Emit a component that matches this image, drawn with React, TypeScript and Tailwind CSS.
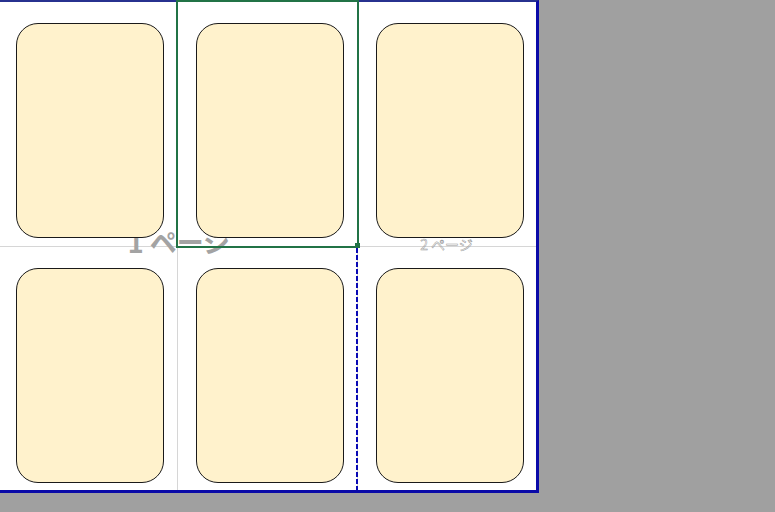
export default function App() {
  const rows = [0, 1];
  const cols = [0, 1, 2];

  return (
    <div className="h-[512px] w-[775px] overflow-hidden bg-[#a0a0a0] font-['Noto_Sans_CJK_JP',sans-serif]">
      <div className="relative h-[493px] w-[539px]">
        {/* page labels sit under the shapes */}
        <div className="absolute left-0 top-[228px] flex h-[28px] w-[358px] items-center justify-center text-[27px] leading-[28px] font-bold text-[#a3a3a3]">
          1&nbsp;ページ
        </div>
        <div className="absolute left-[357px] top-[237px] flex h-[14px] w-[179px] items-center justify-center text-[14px] leading-[14px] text-transparent [-webkit-text-stroke:0.5px_#999999]">
          2&nbsp;ページ
        </div>

        <div className="h-[493px] w-[539px] border-t-2 border-r-[3px] border-b-[3px] border-t-[#27318f] border-r-[#0a0aa8] border-b-[#0a0aa8] bg-white">
          {rows.map((r) => (
            <div key={r} className="flex">
              {cols.map((c) => (
                <div
                  key={c}
                  className={
                    (c === 0 ? 'w-[178px] pl-4 ' : c === 1 ? 'w-[180px] pl-[18px] ' : 'w-[178px] pl-[18px] ') +
                    (r === 0 ? 'h-[245px] border-b ' : 'h-[243px] ') +
                    (c < 2 ? 'border-r ' : '') +
                    'border-[#d6d6d6] pt-[21px]'
                  }
                >
                  <div className="relative h-[215px] w-[148px] rounded-[22px] border border-[#1a1a1a] bg-[#fff2cc]" />
                </div>
              ))}
            </div>
          ))}
        </div>

        {/* selected cell */}
        <div className="absolute left-[176px] top-0 h-[248px] w-[183px] border-2 border-[#217346]" />
        <div className="absolute left-[355px] top-[243px] h-[5px] w-[5px] bg-[#217346]" />

        {/* page break */}
        <div className="absolute left-[356px] top-[248px] h-[242px] w-[2px] bg-[repeating-linear-gradient(to_bottom,#0a0ab4_0_5px,transparent_5px_7px)]" />
      </div>
    </div>
  );
}
